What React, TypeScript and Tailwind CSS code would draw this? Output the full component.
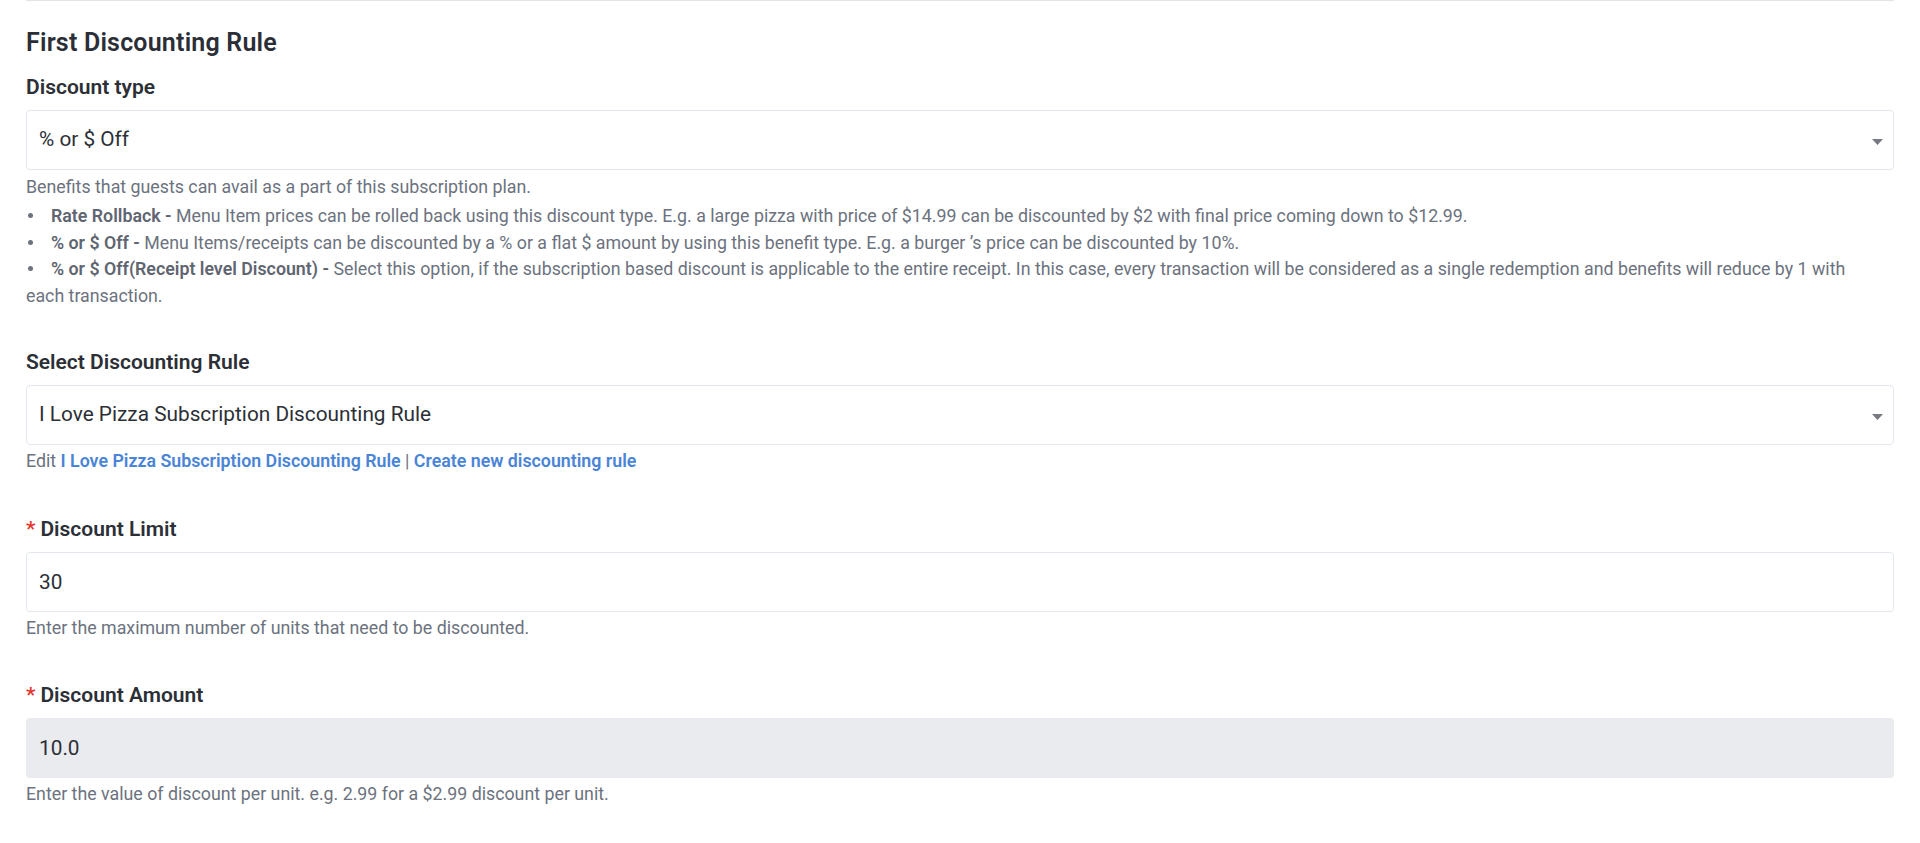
import { useState } from "react";

const discountTypes = [
  "Rate Rollback",
  "% or $ Off",
  "% or $ Off(Receipt level Discount)",
];

const discountingRules = [
  "I Love Pizza Subscription Discounting Rule",
  "Happy Hour Discounting Rule",
];

function FieldLabel({
  children,
  required,
}: {
  children: React.ReactNode;
  required?: boolean;
}) {
  return (
    <label className="block text-[21px] leading-6 font-semibold text-[#2c2f36]">
      {required && <span className="text-[#e5372f] mr-[5px]">*</span>}
      {children}
    </label>
  );
}

function SelectBox({
  value,
  options,
  onChange,
}: {
  value: string;
  options: string[];
  onChange: (v: string) => void;
}) {
  return (
    <div className="relative mt-[11px]">
      <select
        value={value}
        onChange={(e) => onChange(e.target.value)}
        className="block w-full h-[60px] appearance-none rounded-[4px] border border-[#e3e8ef] bg-white pl-3 pr-10 text-[20.8px] text-[#2c2f36] outline-none"
      >
        {options.map((o) => (
          <option key={o} value={o}>
            {o}
          </option>
        ))}
      </select>
      {/* caret */}
      <svg
        className="pointer-events-none absolute right-[11px] top-[29px]"
        width="11"
        height="6"
        viewBox="0 0 11 6"
      >
        <path d="M0 0h11L5.5 6z" fill="#777a80" />
      </svg>
    </div>
  );
}

function HelpText({
  children,
  className = "",
}: {
  children: React.ReactNode;
  className?: string;
}) {
  return (
    <p className={`text-[17.8px] leading-6 text-[#6c727e] ${className}`}>
      {children}
    </p>
  );
}

function Bullet({ title, children }: { title: string; children: string }) {
  return (
    <li>
      <span className="inline-block w-[25px] align-middle">
        <span className="ml-[2px] mb-[3px] block h-[5px] w-[5px] rounded-full bg-[#6c727e]" />
      </span>
      <span className="font-semibold text-[#5f6571]">{title} -</span>{" "}
      {children}
    </li>
  );
}

export default function App() {
  const [discountType, setDiscountType] = useState("% or $ Off");
  const [rule, setRule] = useState(discountingRules[0]);
  const [limit, setLimit] = useState("30");

  return (
    <div className="min-h-screen bg-white px-[26px] font-['Roboto','Liberation_Sans',sans-serif]">
      <div className="border-t border-[#e1e5ea]">
        <h2 className="pt-[28px] text-[25px] leading-7 font-semibold tracking-[0.2px] text-[#2b2e36]">
          First Discounting Rule
        </h2>

        {/* Discount type */}
        <div className="mt-[18px]">
          <FieldLabel>Discount type</FieldLabel>
          <SelectBox
            value={discountType}
            options={discountTypes}
            onChange={setDiscountType}
          />
          <HelpText className="mt-[5px]">
            Benefits that guests can avail as a part of this subscription plan.
          </HelpText>
          <ul className="mt-[4px] pr-[20px] text-[17.8px] leading-[26.5px] text-[#6c727e]">
            <Bullet title="Rate Rollback">
              Menu Item prices can be rolled back using this discount type. E.g.
              a large pizza with price of $14.99 can be discounted by $2 with
              final price coming down to $12.99.
            </Bullet>
            <Bullet title="% or $ Off">
              Menu Items/receipts can be discounted by a % or a flat $ amount by
              using this benefit type. E.g. a burger ’s price can be discounted
              by 10%.
            </Bullet>
            <Bullet title="% or $ Off(Receipt level Discount)">
              Select this option, if the subscription based discount is
              applicable to the entire receipt. In this case, every transaction
              will be considered as a single redemption and benefits will reduce
              by 1 with each transaction.
            </Bullet>
          </ul>
        </div>

        {/* Discounting rule */}
        <div className="mt-[41px]">
          <FieldLabel>Select Discounting Rule</FieldLabel>
          <SelectBox
            value={rule}
            options={discountingRules}
            onChange={setRule}
          />
          <HelpText className="mt-[4px]">
            Edit{" "}
            <a href="#" className="font-semibold text-[#4a84d6]">
              {rule}
            </a>{" "}
            |{" "}
            <a href="#" className="font-semibold text-[#4a84d6]">
              Create new discounting rule
            </a>
          </HelpText>
        </div>

        {/* Discount limit */}
        <div className="mt-[44px]">
          <FieldLabel required>Discount Limit</FieldLabel>
          <input
            type="text"
            value={limit}
            onChange={(e) => setLimit(e.target.value)}
            className="mt-[11px] block h-[60px] w-full rounded-[4px] border border-[#e3e8ef] bg-white px-3 text-[20.8px] text-[#2c2f36] outline-none"
          />
          <HelpText className="mt-[4px]">
            Enter the maximum number of units that need to be discounted.
          </HelpText>
        </div>

        {/* Discount amount */}
        <div className="mt-[43px]">
          <FieldLabel required>Discount Amount</FieldLabel>
          <input
            type="text"
            value="10.0"
            readOnly
            className="mt-[11px] block h-[60px] w-full rounded-[4px] border border-[#e9ebef] bg-[#e9ebef] px-3 text-[20.8px] text-[#2c2f36] outline-none"
          />
          <HelpText className="mt-[4px]">
            Enter the value of discount per unit. e.g. 2.99 for a $2.99 discount
            per unit.
          </HelpText>
        </div>
      </div>
    </div>
  );
}
